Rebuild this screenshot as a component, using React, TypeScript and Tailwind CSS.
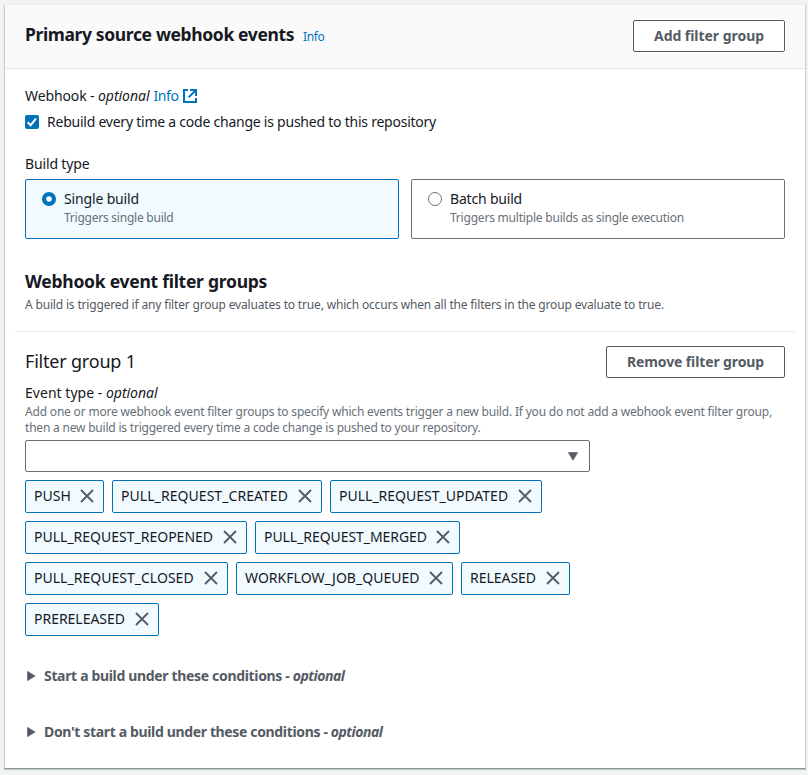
import type { ReactNode } from "react";

const tagRows = [
  [
    { label: "PUSH", box: "w-[79px]", track: "tracking-[0.059px]" },
    { label: "PULL_REQUEST_CREATED", box: "w-[210px]", track: "tracking-[0.059px]" },
    { label: "PULL_REQUEST_UPDATED", box: "w-[212px]", track: "tracking-[0px]" },
  ],
  [
    { label: "PULL_REQUEST_REOPENED", box: "w-[222px]", track: "tracking-[0px]" },
    { label: "PULL_REQUEST_MERGED", box: "w-[205px]", track: "tracking-[-0.058px]" },
  ],
  [
    { label: "PULL_REQUEST_CLOSED", box: "w-[203px]", track: "tracking-[0.02px]" },
    { label: "WORKFLOW_JOB_QUEUED", box: "w-[217px]", track: "tracking-[0.02px]" },
    { label: "RELEASED", box: "w-[109px]", track: "tracking-[-0.031px]" },
  ],
  [{ label: "PRERELEASED", box: "w-[134px]", track: "tracking-[-0.019px]" }],
];

function Tag({ label, box, track }: { label: string; box: string; track: string }) {
  return (
    <div className={`flex h-[33px] items-center justify-between rounded-[2px] border border-[#0073bb] bg-[#f1faff] pr-[9px] pb-px pl-2 whitespace-nowrap ${box}`}>
      <span className={track}>{label}</span>
      <svg width="14" height="14" viewBox="0 0 14 14" fill="none" stroke="#545b64" strokeWidth="1.8">
        <path d="M1 1l12 12M13 1L1 13" />
      </svg>
    </div>
  );
}

function Button({ children, className }: { children: ReactNode; className: string }) {
  return (
    <button className={`flex h-8 items-center justify-center rounded-[2px] border border-[#545b64] bg-white font-bold whitespace-nowrap text-[#545b64] ${className}`}>
      {children}
    </button>
  );
}

function Expander({ label, track }: { label: string; track: string }) {
  return (
    <div className="flex h-5 items-center font-bold whitespace-pre text-[#545b64]">
      <svg width="9" height="10" viewBox="0 0 9 10" className="mr-[8px] ml-[2px]">
        <path d="M0.3 0.3L8.2 5L0.3 9.7z" fill="#545b64" stroke="#545b64" strokeLinejoin="round" strokeWidth="0.6" />
      </svg>
      <span className={track}>{label} - </span>
      <i className="tracking-[-0.5px]">optional</i>
    </div>
  );
}

export default function App() {
  return (
    <div className="h-[775px] w-[808px] bg-[#f2f3f3] pt-1 pl-1 font-['Noto_Sans',sans-serif] text-[14px] leading-5 text-[#16191f]">
      <main className="h-[765px] w-[802px] border border-t-[#eaeded] border-r-[#d0d5d6] border-b-[#879596] border-l-[#cbd1d3] bg-white shadow-[0_1px_1px_rgba(0,28,36,0.2)]">
        <header className="flex h-16 items-start justify-between border-b border-[#e3e7e7] bg-[#fafafa] pt-[15px] pr-5 pl-5">
          <div className="flex items-baseline pt-[3px]">
            <h2 className="w-[278px] text-[17.5px] leading-[22px] font-bold tracking-[-0.37px] whitespace-nowrap">Primary source webhook events</h2>
            <a className="text-[12px] tracking-[-0.34px] text-[#0073bb]">Info</a>
          </div>
          <Button className="w-[152px] tracking-[-0.04px]">Add filter group</Button>
        </header>

        <section className="px-5">
          <div className="mt-[17px] flex h-5 items-center whitespace-pre">
            <span className="tracking-[-0.11px]">Webhook - </span>
            <i className="tracking-[-0.04px]">optional</i>
            <a className="ml-1 tracking-[-0.42px] text-[#0073bb]">Info</a>
            <svg width="14" height="14" viewBox="0 0 14 14" fill="none" stroke="#0073bb" strokeWidth="2" className="ml-1">
              <path d="M5 1H1v12h12V9" />
              <path d="M7 1h6v6M12.7 1.3L5.6 8.4" />
            </svg>
          </div>
          <label className="mt-1.5 flex h-5 items-center">
            <svg width="14" height="14" viewBox="0 0 14 14" className="mr-2">
              <rect width="14" height="14" rx="2" fill="#0073bb" />
              <path d="M2.6 7.2L5.7 10.2L11 3.5" fill="none" stroke="white" strokeWidth="2" />
            </svg>
            <span className="tracking-[-0.237px] whitespace-nowrap">Rebuild every time a code change is pushed to this repository</span>
          </label>

          <p className="mt-[22px] tracking-[-0.143px]">Build type</p>
          <div className="mt-[5px] flex gap-3">
            <div className="flex h-[60px] w-[374px] rounded-[2px] border border-[#0073bb] bg-[#f1faff] pt-[9px] pl-4">
              <svg width="14" height="14" viewBox="0 0 14 14" className="mt-[3px] mr-2">
                <circle cx="7" cy="7" r="7" fill="#0073bb" />
                <circle cx="7" cy="7" r="2.8" fill="white" />
              </svg>
              <div>
                <p className="tracking-[-0.15px]">Single build</p>
                <p className="text-[12px] leading-[18px] tracking-[-0.237px] text-[#687078]">Triggers single build</p>
              </div>
            </div>
            <div className="flex h-[60px] w-[374px] rounded-[2px] border border-[#687078] pt-[9px] pl-4">
              <svg width="14" height="14" viewBox="0 0 14 14" className="mt-[3px] mr-2">
                <circle cx="7" cy="7" r="6.5" fill="white" stroke="#687078" />
              </svg>
              <div>
                <p className="tracking-[-0.19px]">Batch build</p>
                <p className="text-[12px] leading-[18px] tracking-[-0.208px] text-[#687078]">Triggers multiple builds as single execution</p>
              </div>
            </div>
          </div>

          <h2 className="mt-[31px] text-[17.5px] leading-[22px] font-bold tracking-[-0.26px]">Webhook event filter groups</h2>
          <p className="mt-[5px] text-[12px] leading-4 tracking-[-0.168px] whitespace-nowrap text-[#545b64]">
            A build is triggered if any filter group evaluates to true, which occurs when all the filters in the group evaluate to true.
          </p>
        </section>

        <hr className="mx-[10px] mt-[18px] border-[#eaeded]" />

        <section className="px-5 pt-[14px]">
          <div className="flex justify-between">
            <h3 className="pt-1 text-[18px] leading-[22px] tracking-[-0.2px]">Filter group 1</h3>
            <Button className="w-[179px] tracking-[-0.12px]">Remove filter group</Button>
          </div>
          <p className="mt-[5px] whitespace-pre">
            <span className="tracking-[0.03px]">Event type - </span>
            <i className="tracking-[-0.04px]">optional</i>
          </p>
          <div className="mt-px text-[12px] leading-4 whitespace-nowrap text-[#687078]">
            <p className="tracking-[-0.186px]">Add one or more webhook event filter groups to specify which events trigger a new build. If you do not add a webhook event filter group,</p>
            <p className="tracking-[-0.205px]">then a new build is triggered every time a code change is pushed to your repository.</p>
          </div>
          <div className="mt-1 flex h-8 w-[565px] items-center justify-end rounded-[2px] border border-[#687078] pr-[11px]">
            <svg width="10" height="9" viewBox="0 0 10 9">
              <path d="M0.3 0.5H9.7L5 8.3z" fill="#545b64" stroke="#545b64" strokeLinejoin="round" strokeWidth="0.6" />
            </svg>
          </div>
          <div className="mt-2 flex flex-col gap-2">
            {tagRows.map((row) => (
              <div key={row[0].label} className="flex gap-2">
                {row.map((tag) => (
                  <Tag key={tag.label} {...tag} />
                ))}
              </div>
            ))}
          </div>
          <div className="mt-[30px] flex flex-col gap-9">
            <Expander label="Start a build under these conditions" track="tracking-[-0.335px]" />
            <Expander label="Don't start a build under these conditions" track="tracking-[-0.35px]" />
          </div>
        </section>
      </main>
    </div>
  );
}
